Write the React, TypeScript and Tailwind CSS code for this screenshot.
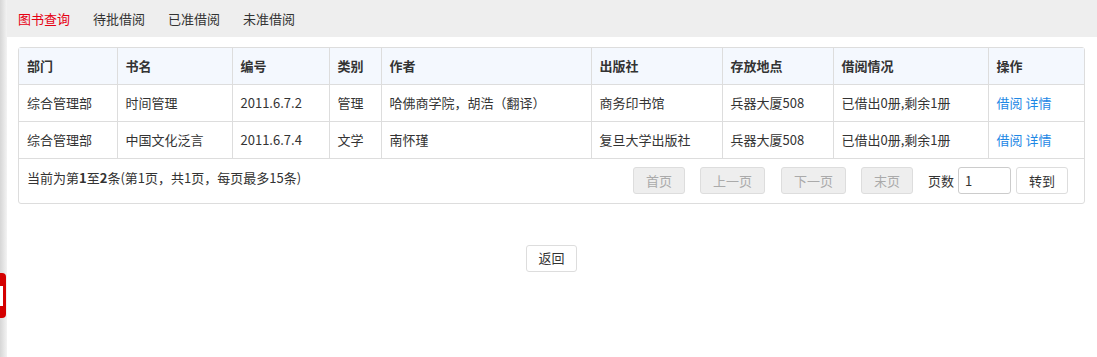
import React from "react";

const cols = [
  { title: "部门", w: "w-[98px]" },
  { title: "书名", w: "w-[115px]" },
  { title: "编号", w: "w-[97px]" },
  { title: "类别", w: "w-[52px]" },
  { title: "作者", w: "w-[210px]" },
  { title: "出版社", w: "w-[131px]" },
  { title: "存放地点", w: "w-[111px]" },
  { title: "借阅情况", w: "w-[155px]" },
  { title: "操作", w: "" },
];

const rows = [
  ["综合管理部", "时间管理", "2011.6.7.2", "管理", "哈佛商学院，胡浩（翻译）", "商务印书馆", "兵器大厦508", "已借出0册,剩余1册"],
  ["综合管理部", "中国文化泛言", "2011.6.7.4", "文学", "南怀瑾", "复旦大学出版社", "兵器大厦508", "已借出0册,剩余1册"],
];

const tabs = ["图书查询", "待批借阅", "已准借阅", "未准借阅"];

const App = () => {
  return (
    <div
      className="relative flex w-[1097px] h-[357px] bg-white text-[13px] text-[#333] overflow-hidden"
      style={{ fontFamily: '"Noto Sans CJK SC", "Noto Sans", sans-serif' }}
    >
      {/* 左侧阴影条 */}
      <div className="w-[7px] shrink-0 bg-gradient-to-r from-[#d6d6d6] to-[#f3f3f3]" />

      <div className="flex-1 flex flex-col">
        {/* 顶部标签 */}
        <div className="h-[37px] bg-[#eeeeee] flex items-center pl-[11px] gap-[23px]">
          {tabs.map((t, i) => (
            <span key={t} className={i === 0 ? "text-[#e60012]" : "text-[#333]"}>
              {t}
            </span>
          ))}
        </div>

        <div className="pl-[11px] pr-[12px] pt-[10px]">
          <div className="border border-[#dddddd] rounded-[3px]">
            <table className="w-full border-collapse table-fixed">
              <thead>
                <tr className="bg-[#f4f8fe] h-[36px]">
                  {cols.map((c, i) => (
                    <th
                      key={c.title}
                      className={`${c.w} text-left font-bold px-[8px] border-b border-[#dddddd] ${i > 0 ? "border-l" : ""}`}
                    >
                      {c.title}
                    </th>
                  ))}
                </tr>
              </thead>
              <tbody>
                {rows.map((r, ri) => (
                  <tr key={ri} className="h-[37px]">
                    {r.map((v, i) => (
                      <td
                        key={i}
                        className={`px-[8px] border-b border-[#dddddd] ${i > 0 ? "border-l" : ""} whitespace-nowrap`}
                      >
                        {v}
                      </td>
                    ))}
                    <td className="px-[8px] border-b border-l border-[#dddddd] text-[#1e88e5] whitespace-nowrap">
                      借阅 详情
                    </td>
                  </tr>
                ))}
              </tbody>
            </table>

            {/* 分页 */}
            <div className="h-[44px] flex items-center pl-[8px] pr-[16px]">
              <span className="flex-1 -mt-[6px]">
                当前为第<b>1</b>至<b>2</b>条(第1页，共1页，每页最多15条)
              </span>
              <div className="flex items-center">
                <button className="w-[52px] h-[27px] bg-[#eeeeee] border border-[#dddddd] rounded-[3px] text-[#aaaaaa]">首页</button>
                <button className="ml-[15px] w-[65px] h-[27px] bg-[#eeeeee] border border-[#dddddd] rounded-[3px] text-[#aaaaaa]">上一页</button>
                <button className="ml-[16px] w-[65px] h-[27px] bg-[#eeeeee] border border-[#dddddd] rounded-[3px] text-[#aaaaaa]">下一页</button>
                <button className="ml-[15px] w-[52px] h-[27px] bg-[#eeeeee] border border-[#dddddd] rounded-[3px] text-[#aaaaaa]">末页</button>
                <span className="ml-[15px]">页数</span>
                <input
                  defaultValue="1"
                  className="ml-[4px] w-[53px] h-[27px] border border-[#cccccc] rounded-[3px] px-[6px] outline-none"
                />
                <button className="ml-[5px] w-[52px] h-[27px] bg-white border border-[#dddddd] rounded-[3px]">转到</button>
              </div>
            </div>
          </div>

          <div className="flex justify-center mt-[41px]">
            <button className="w-[51px] h-[27px] bg-white border border-[#dddddd] rounded-[3px]">返回</button>
          </div>
        </div>
      </div>

      {/* 左侧红色标签 */}
      <div className="absolute left-0 top-[273px] w-[6px] h-[45px] bg-[#d40000] rounded-r-[4px] flex items-center">
        <div className="w-[3px] h-[20px] bg-white" />
      </div>
    </div>
  );
};

export default App;
